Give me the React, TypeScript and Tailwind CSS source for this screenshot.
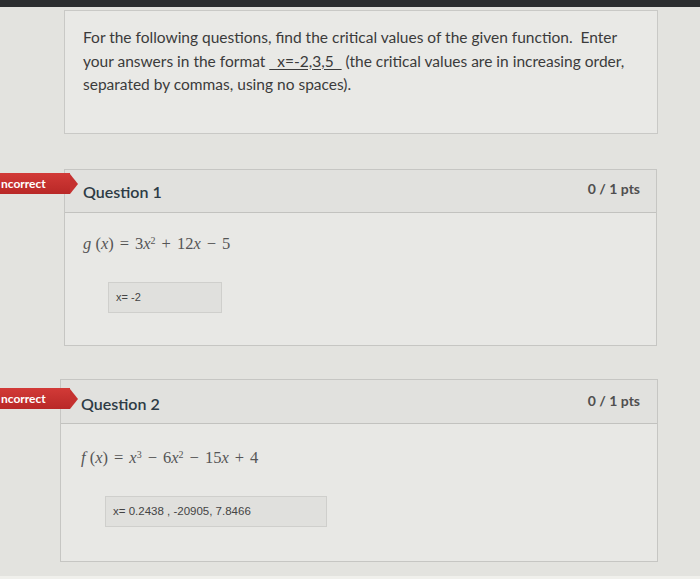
import React from 'react';

const lato = { fontFamily: 'Lato, "Open Sans", sans-serif' };
const mathFont = { fontFamily: '"Liberation Serif", "DejaVu Serif", serif', fontSize: 16.5, lineHeight: '22px' };
const answerFont = { fontFamily: '"Liberation Sans", Arial, sans-serif' };

const Tag: React.FC<{ top: string }> = ({ top }) => (
  <div className={`absolute left-0 ${top} flex h-[21px] items-center`}>
    <div className="flex h-full w-[70px] items-center bg-gradient-to-b from-[#d23a37] to-[#b92827] pl-[1px]">
      <span className="text-[12px] font-bold text-white" style={lato}>ncorrect</span>
    </div>
    <div className="h-0 w-0 border-y-[10.5px] border-l-[8px] border-y-transparent border-l-[#c53130]" />
  </div>
);

const Var: React.FC<{ children: React.ReactNode }> = ({ children }) => (
  <i className="italic">{children}</i>
);

const Op: React.FC<{ children: React.ReactNode }> = ({ children }) => (
  <span className="mx-[6px]">{children}</span>
);

const App: React.FC = () => {
  return (
    <div className="relative h-[579px] w-[700px] overflow-hidden bg-[#e3e3df]" style={lato}>
      <div className="h-[7px] bg-[#2c2e30]" />

      {/* intro box */}
      <div className="ml-[64px] mt-[3px] h-[124px] w-[594px] border border-[#c9c9c6] bg-[#e9e9e6] pl-[18px] pt-[15px]">
        <p className="text-[15.5px] leading-[23.5px] text-[#3b3b3b]">
          For the following questions, find the critical values of the given function.&nbsp; Enter
          <br />
          your answers in the format <span className="underline decoration-[#3b3b3b] underline-offset-2">&nbsp;&nbsp;x=-2,3,5&nbsp;&nbsp;</span> (the critical values are in increasing order,
          <br />
          separated by commas, using no spaces).
        </p>
      </div>

      {/* question 1 */}
      <div className="ml-[64px] mt-[35px] h-[177px] w-[593px] border border-[#c6c6c3] bg-[#e8e8e5]">
        <div className="flex h-[43px] items-center justify-between border-b border-[#c2c2bf] bg-[#e1e1de] pl-[18px] pr-[16px]">
          <span className="mt-[1px] text-[16px] font-semibold text-[#2d3b45]">Question 1</span>
          <span className="mb-[6px] text-[14px] font-bold text-[#4f4f4f]">0 / 1 pts</span>
        </div>
        <div className="pl-[18px] pt-[20px]">
          <div className="text-[#555]" style={mathFont}>
            <Var>g</Var> (<Var>x</Var>)<Op>=</Op>3<Var>x</Var><sup className="text-[10px]">2</sup><Op>+</Op>12<Var>x</Var><Op>−</Op>5
          </div>
          <div className="ml-[25px] mt-[27px] flex h-[31px] w-[114px] items-center border border-[#cfcfcc] bg-[#e0e0dd] pl-[7px]">
            <span className="text-[11px] text-[#444]" style={answerFont}>x= -2</span>
          </div>
        </div>
      </div>

      {/* question 2 */}
      <div className="ml-[60px] mt-[33px] h-[183px] w-[598px] border border-[#c6c6c3] bg-[#e8e8e5]">
        <div className="flex h-[44px] items-center justify-between border-b border-[#c2c2bf] bg-[#e1e1de] pl-[20px] pr-[17px]">
          <span className="mt-[4px] text-[16px] font-semibold text-[#2d3b45]">Question 2</span>
          <span className="mb-[2px] text-[14px] font-bold text-[#4f4f4f]">0 / 1 pts</span>
        </div>
        <div className="pl-[20px] pt-[23px]">
          <div className="text-[#555]" style={mathFont}>
            <Var>f</Var> (<Var>x</Var>)<Op>=</Op><Var>x</Var><sup className="text-[10px]">3</sup><Op>−</Op>6<Var>x</Var><sup className="text-[10px]">2</sup><Op>−</Op>15<Var>x</Var><Op>+</Op>4
          </div>
          <div className="ml-[24px] mt-[27px] flex h-[31px] w-[222px] items-center border border-[#cfcfcc] bg-[#e0e0dd] pl-[7px]">
            <span className="text-[11.5px] text-[#444]" style={answerFont}>x= 0.2438 , -20905, 7.8466</span>
          </div>
        </div>
      </div>

      <Tag top="top-[173px]" />
      <Tag top="top-[388px]" />

      <div className="absolute bottom-0 left-0 h-[3px] w-full bg-[#f0f0ec]" />
    </div>
  );
};

export default App;
